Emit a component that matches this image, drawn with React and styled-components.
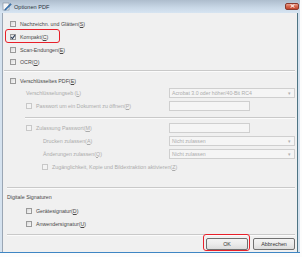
import React from "react";
import styled, { createGlobalStyle } from "styled-components";

const GlobalStyle = createGlobalStyle`
  html, body {
    margin: 0;
    padding: 0;
    background: #fcfcfc;
  }
  body {
    font-family: "Liberation Sans", Arial, sans-serif;
  }
`;

const Check = ({ checked, disabled }) => (
  <Box $disabled={disabled}>
    {checked && (
      <svg width="6" height="6" viewBox="0 0 6 6">
        <path d="M1 3 L2.4 4.6 L5 1.2" fill="none" stroke="#2c3e5a" strokeWidth="1.1" />
      </svg>
    )}
  </Box>
);

const Select = ({ value }) => (
  <Dropdown>
    <span>{value}</span>
    <Arrow>▾</Arrow>
  </Dropdown>
);

const Mn = ({ children }) => <u>{children}</u>;

const App = () => {
  return (
    <>
      <GlobalStyle />
      <Window>
        <TitleBar>
          <TitleIcon>
            <svg width="10" height="9" viewBox="0 0 10 9">
              <rect x="1" y="1" width="6" height="7" fill="#f4f6f8" stroke="#7b8796" strokeWidth="0.6" />
              <path d="M3 7 L8.5 1.5 L9.4 2.4 L3.9 7.9 L2.6 8.2 Z" fill="#3c79b8" stroke="#24507e" strokeWidth="0.4" />
            </svg>
          </TitleIcon>
          <Title>Optionen PDF</Title>
          <Close>
            <svg width="5" height="4" viewBox="0 0 5 4">
              <path d="M0.6 0.4 L4.4 3.6 M4.4 0.4 L0.6 3.6" stroke="#fff" strokeWidth="1" />
            </svg>
          </Close>
        </TitleBar>
        <Client>
          <Row $h={13}>
            <Check />
            <Label>Nachzeichn. und Glätten(<Mn>S</Mn>)</Label>
          </Row>
          <Row $h={13}>
            <Highlight $w={55} $l={-5} />
            <Check checked />
            <Label>Kompakt(<Mn>C</Mn>)</Label>
          </Row>
          <Row $h={13}>
            <Check />
            <Label>Scan-Endungen(<Mn>E</Mn>)</Label>
          </Row>
          <Row $h={12}>
            <Check />
            <Label>OCR(<Mn>O</Mn>)</Label>
          </Row>
          <Separator $left={1} $top={2} $bottom={3} />
          <Row $h={12}>
            <Check />
            <Label>Verschlüsseltes PDF(<Mn>E</Mn>)</Label>
          </Row>

          <Field $indent={16}>
            <FieldLabel $disabled>Verschlüsselungseb (<Mn>L</Mn>)</FieldLabel>
            <Select value="Acrobat 3.0 oder höher/40-Bit RC4" />
          </Field>
          <Field $indent={16} $top={2}>
            <Check disabled />
            <FieldLabel $disabled>Passwort um ein Dokument zu öffnen(<Mn>P</Mn>)</FieldLabel>
            <TextBox />
          </Field>
          <Separator $left={22} $top={6} $bottom={3} />
          <Field $indent={16}>
            <Check disabled />
            <FieldLabel $disabled>Zulassung Passwort(<Mn>M</Mn>)</FieldLabel>
            <TextBox />
          </Field>
          <Field $indent={33} $top={2}>
            <FieldLabel $disabled>Drucken zulassen(<Mn>A</Mn>)</FieldLabel>
            <Select value="Nicht zulassen" />
          </Field>
          <Field $indent={33} $top={2}>
            <FieldLabel $disabled>Änderungen zulassen(<Mn>Q</Mn>)</FieldLabel>
            <Select value="Nicht zulassen" />
          </Field>
          <Field $indent={32} $top={2}>
            <Check disabled />
            <FieldLabel $disabled>
              Zugänglichkeit, Kopie und Bildextraktion aktivieren(<Mn>Z</Mn>)
            </FieldLabel>
          </Field>

          <Separator $left={4} $top={15} $bottom={3} />
          <GroupTitle>Digitale Signaturen</GroupTitle>
          <Row $h={11} $indent={16} $top={3}>
            <Check />
            <Label>Gerätesignatur(<Mn>D</Mn>)</Label>
          </Row>
          <Row $h={11} $indent={16} $top={2}>
            <Check />
            <Label>Anwendersignatur(<Mn>U</Mn>)</Label>
          </Row>
          <Separator $left={4} $top={5} $bottom={2} />
          <Buttons>
            <ButtonWrap>
              <Button>OK</Button>
              <ButtonRing />
            </ButtonWrap>
            <Button>Abbrechen</Button>
          </Buttons>
        </Client>
      </Window>
    </>
  );
};

export default App;

/* ================== STYLES ================== */

const Window = styled.div`
  width: 300px;
  height: 253px;
  display: flex;
  flex-direction: column;
  background: #d5e2ef;
  box-sizing: border-box;
  border-bottom: 1px solid #3f86c4;
`;

const TitleBar = styled.div`
  height: 13px;
  flex: none;
  display: flex;
  align-items: center;
  padding: 0 1px 0 2px;
  background: linear-gradient(#aebdcd, #c9d8e7 60%, #d7e5f2);
`;

const TitleIcon = styled.div`
  width: 10px;
  height: 9px;
  display: flex;
`;

const Title = styled.div`
  margin-left: 2px;
  font-size: 5.6px;
  color: #2a323c;
  flex: 1;
`;

const Close = styled.div`
  width: 14px;
  height: 7px;
  margin-top: -1px;
  border: 1px solid #8a3a2e;
  border-radius: 2px;
  box-sizing: border-box;
  background: linear-gradient(#eba08e, #d6684f 50%, #c0442c);
  display: flex;
  align-items: center;
  justify-content: center;
`;

const Client = styled.div`
  flex: 1;
  margin: 0 2px 0 2px;
  padding: 4px 2px 0 7px;
  background: #f0f0f0;
  border-left: 1px solid #9aa6b4;
  border-right: 1px solid #4d7484;
  display: flex;
  flex-direction: column;
`;

const Row = styled.div`
  position: relative;
  height: ${(p) => p.$h}px;
  margin-top: ${(p) => p.$top || 0}px;
  padding-left: ${(p) => p.$indent || 0}px;
  display: flex;
  align-items: center;
`;

const Highlight = styled.div`
  position: absolute;
  left: ${(p) => p.$l}px;
  top: -1px;
  width: ${(p) => p.$w}px;
  height: 14px;
  border: 1.3px solid #e8202a;
  border-radius: 3px;
  box-sizing: border-box;
`;

const Box = styled.span`
  width: 6px;
  height: 6px;
  flex: none;
  box-sizing: border-box;
  border: 1px solid ${(p) => (p.$disabled ? "#c8c8c8" : "#9a9a9a")};
  background: ${(p) =>
    p.$disabled ? "#f3f3f3" : "linear-gradient(135deg, #dadada, #f8f8f8)"};
  display: flex;
  align-items: center;
  justify-content: center;
  overflow: visible;

  svg {
    flex: none;
  }
`;

const Label = styled.span`
  margin-left: 4px;
  font-size: 5.3px;
  color: ${(p) => (p.$disabled ? "#ababab" : "#484848")};
  white-space: nowrap;
`;

const Field = styled.div`
  height: 11px;
  margin-top: ${(p) => p.$top || 0}px;
  padding-left: ${(p) => p.$indent}px;
  display: flex;
  align-items: center;
`;

const FieldLabel = styled(Label)`
  flex: 1;
  margin-left: 0;
  ${Box} + & {
    margin-left: 4px;
  }
`;

const Dropdown = styled.div`
  width: 126px;
  height: 10px;
  flex: none;
  box-sizing: border-box;
  border: 1px solid #cfcfcf;
  background: #f5f5f5;
  display: flex;
  align-items: center;
  justify-content: space-between;
  padding: 0 3px 0 2px;
  font-size: 5.2px;
  color: #adadad;
  white-space: nowrap;
`;

const Arrow = styled.span`
  font-size: 5px;
  color: #b0b0b0;
`;

const TextBox = styled.div`
  width: 81px;
  height: 10px;
  flex: none;
  margin-right: 45px;
  box-sizing: border-box;
  border: 1px solid #cfcfcf;
  background: #f5f5f5;
`;

const Separator = styled.div`
  height: 1px;
  margin: ${(p) => p.$top}px 0 ${(p) => p.$bottom}px ${(p) => p.$left - 7}px;
  margin-right: 0;
  background: #c9c9c9;
  border-bottom: 1px solid #fbfbfb;
  flex: none;
`;

const GroupTitle = styled.div`
  height: 10px;
  margin-left: -3px;
  display: flex;
  align-items: center;
  font-size: 5.3px;
  color: #484848;
`;

const Buttons = styled.div`
  display: flex;
  justify-content: flex-end;
  gap: 5px;
  padding-right: 0;
`;

const ButtonWrap = styled.div`
  position: relative;
  display: flex;
`;

const Button = styled.div`
  width: 42px;
  height: 12px;
  box-sizing: border-box;
  border: 1px solid #707070;
  border-radius: 2px;
  background: linear-gradient(#f3f3f3, #ebebeb 50%, #dcdcdc);
  display: flex;
  align-items: center;
  justify-content: center;
  font-size: 5.3px;
  color: #333;
`;

const ButtonRing = styled.div`
  position: absolute;
  left: -3px;
  right: -2px;
  top: -4px;
  bottom: -1px;
  border: 1.3px solid #e8202a;
  border-radius: 3px;
`;
